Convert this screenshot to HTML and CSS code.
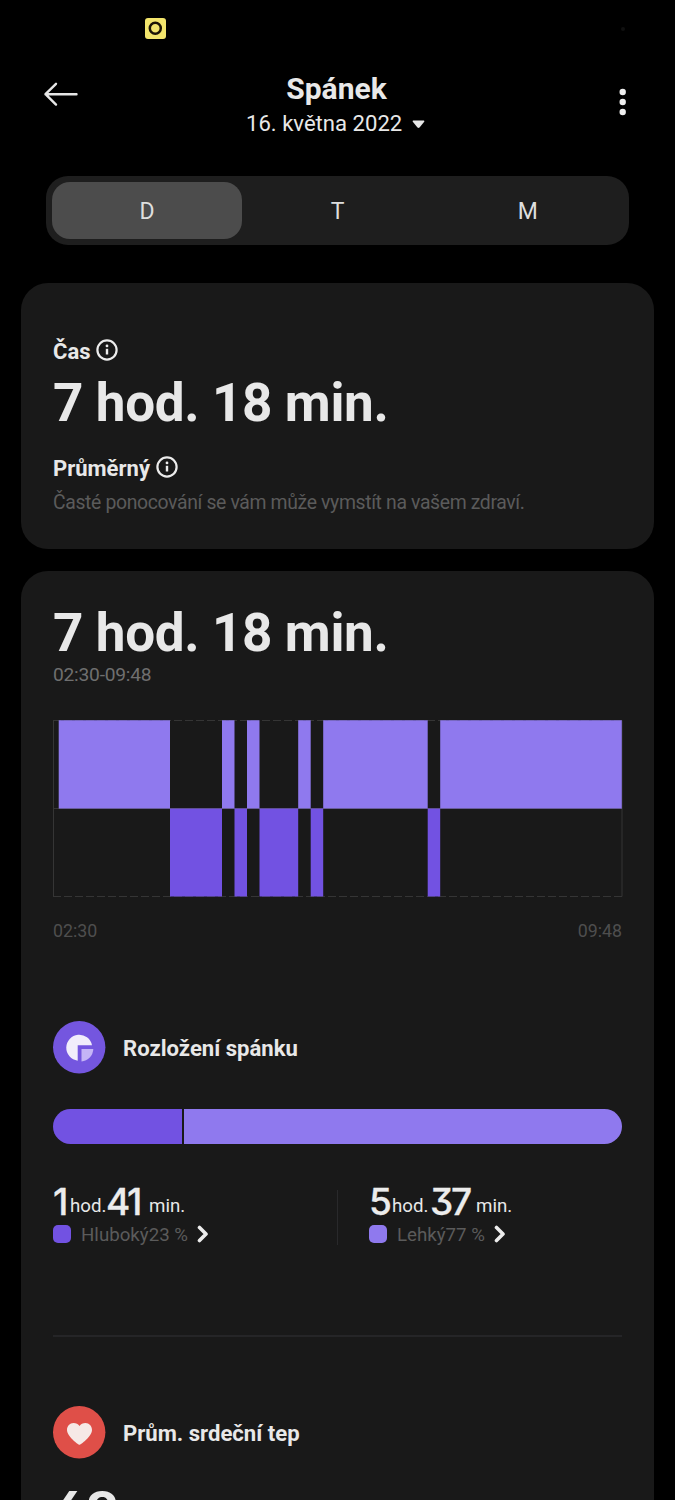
FILE: index.html
```html
<!DOCTYPE html>
<html lang="cs">
<head>
<meta charset="utf-8">
<title>Spánek</title>
<link rel="stylesheet" href="styles.css">
</head>
<body>
<div class="screen">
  <div class="status">
    <svg class="status-app" viewBox="0 0 21 21"><rect width="21" height="21" rx="3" fill="#f3e56c"/><circle cx="10.3" cy="10.3" r="5.5" fill="none" stroke="#1c1405" stroke-width="2.5"/></svg>
    <span class="status-dot"></span>
  </div>

  <header class="header">
    <svg class="back" viewBox="0 0 36 26" fill="none" stroke="#e6e6e6" stroke-width="2.4" stroke-linecap="round" stroke-linejoin="round"><path d="M13 2.8 2.500 13.2l10.500 10.400M2.500 13.2h31"/></svg>
    <div class="heading">
      <h1 class="title">Spánek</h1>
      <div class="date"><span class="date-text">16. května 2022</span>
        <svg class="caret" viewBox="0 0 13 9"><path d="M1.200 .5h10.600q1 .3.400 1.200L7.500 7.600q-1 .9-2 0L.8 1.700q-.6-.9.400-1.200z" fill="#e6e6e6"/></svg>
      </div>
    </div>
    <svg class="more" viewBox="0 0 8 28" fill="#efefef"><circle cx="3.700" cy="4" r="3.200"/><circle cx="3.700" cy="14" r="3.200"/><circle cx="3.700" cy="24" r="3.200"/></svg>
  </header>

  <nav class="tabs">
    <span class="tab tab-active">D</span><span class="tab">T</span><span class="tab">M</span>
  </nav>

  <section class="card summary">
    <div class="label"><span class="label-cas">Čas</span>
      <svg class="info" viewBox="0 0 22 22"><circle cx="11" cy="11" r="9.600" fill="none" stroke="#ececec" stroke-width="2.200"/><path d="M11 9.800v5.700" stroke="#ececec" stroke-width="2.400"/><circle cx="11" cy="6.900" r="1.400" fill="#ececec"/></svg>
    </div>
    <div class="total">7 hod. 18 min.</div>
    <div class="label label-rating"><span class="label-avg">Průměrný</span>
      <svg class="info" viewBox="0 0 22 22"><circle cx="11" cy="11" r="9.600" fill="none" stroke="#ececec" stroke-width="2.200"/><path d="M11 9.800v5.700" stroke="#ececec" stroke-width="2.400"/><circle cx="11" cy="6.900" r="1.400" fill="#ececec"/></svg>
    </div>
    <p class="advice">Časté ponocování se vám může vymstít na vašem zdraví.</p>
  </section>

  <section class="card detail">
    <div class="total">7 hod. 18 min.</div>
    <div class="range">02:30-09:48</div>
    <svg class="chart" viewBox="0 0 570 178">
      <g fill="none" stroke="#353535" stroke-width="1">
        <path d="M.5 .5v176M569 .5v176M0 88.500h569"/>
        <path d="M0 .5h569M0 176.500h569" stroke-dasharray="8 3"/>
      </g>
      <g fill="#8f79ee">
        <path d="M5.700 .2h111.300v88.400H5.700zM169 .2h12.500v88.400H169zM194 .2h12.500v88.400H194zM245.200 .2h12.500v88.400h-12.500zM270.200 .2h104.500v88.400H270.200zM387.200 .2h181.600v88.400H387.200z"/>
      </g>
      <g fill="#7252e2">
        <path d="M117 88.600h52v88h-52zM181.500 88.600H194v88h-12.500zM206.500 88.600h38.700v88h-38.700zM257.700 88.600h12.500v88h-12.500zM374.700 88.600h12.500v88h-12.500z"/>
      </g>
      <path d="M6 88.500h563" stroke="#7768b0" stroke-width="1" stroke-opacity=".35"/>
    </svg>
    <div class="axis"><span>02:30</span><span>09:48</span></div>

    <div class="section-head">
      <svg class="badge" viewBox="0 0 53 53"><circle cx="26.200" cy="26.300" r="26.200" fill="#7456df"/><path d="M39 24.200H24.700V39.700A13 13 0 1 1 39 24.200z" fill="#f1edfb"/><path d="M28.500 28h11.800a13 13 0 0 1-11.800 12.500z" fill="#c5b5f6"/></svg>
      <h2 class="section-title">Rozložení spánku</h2>
    </div>
    <div class="split"><span class="split-deep"></span><span class="split-light"></span></div>
    <div class="stats">
      <div class="stat stat-deep">
        <div class="duration"><b class="num n1">1</b><span class="unit">hod.</span><b class="num n41">41</b><span class="unit">min.</span></div>
        <div class="legend"><i class="swatch deep"></i><span class="legend-text">Hluboký23 %</span><svg class="chevron" viewBox="0 0 12 18"><path d="M2.500 2.500 9 9l-6.500 6.500" fill="none" stroke="#ececec" stroke-width="3.600" stroke-linecap="round" stroke-linejoin="round"/></svg></div>
      </div>
      <div class="stat stat-light">
        <div class="duration"><b class="num n5">5</b><span class="unit">hod.</span><b class="num n37">37</b><span class="unit">min.</span></div>
        <div class="legend"><i class="swatch light"></i><span class="legend-text">Lehký77 %</span><svg class="chevron" viewBox="0 0 12 18"><path d="M2.500 2.500 9 9l-6.500 6.500" fill="none" stroke="#ececec" stroke-width="3.600" stroke-linecap="round" stroke-linejoin="round"/></svg></div>
      </div>
    </div>
    <div class="section-head heart-head">
      <svg class="badge" viewBox="0 0 53 53"><circle cx="26.200" cy="26.300" r="26.200" fill="#df4f48"/><path d="M26.500 38.800c-1 0-12.500-8.300-12.500-14.800 0-4 2.900-7 6.500-7 2.500 0 4.900 1.200 6 3 1.100-1.800 3.500-3 6-3 3.600 0 6.500 3 6.500 7 0 6.500-11.500 14.800-12.500 14.800z" fill="#f6e9e6"/></svg>
      <h2 class="section-title">Prům. srdeční tep</h2>
    </div>
    <div class="pulse">68</div>
  </section>
</div>
</body>
</html>
```

FILE: styles.css
```css
* { box-sizing: border-box; }
body { margin: 0; background: #000; font-family: Roboto, sans-serif; color: #e8e8e8; }
h1, h2, p { margin: 0; }
svg { display: block; flex: none; }

.screen { width: 675px; height: 1500px; overflow: hidden; background: #000; display: flex; flex-direction: column; }

.status { height: 60px; flex: none; padding: 18px 50px 0 145px; display: flex; justify-content: space-between; align-items: flex-start; }
.status-app { width: 21px; height: 21px; }
.status-dot { width: 4px; height: 4px; border-radius: 2px; background: #101010; margin-top: 9px; }

.header { height: 116px; flex: none; padding: 0 48px 0 43px; display: grid; grid-template-columns: 203px 181px 1fr; align-items: start; }
.back { width: 36px; height: 26px; margin-top: 21px; }
.heading { padding-top: 11px; }
.title { font-size: 30px; line-height: 36px; font-weight: 700; white-space: nowrap; text-align: center; }
.date { display: flex; align-items: center; gap: 10px; font-size: 22.100px; line-height: 32px; white-space: nowrap; }
.caret { width: 13px; height: 9px; margin-top: 2px; }
.more { width: 8px; height: 28px; margin-top: 28px; justify-self: end; }

.tabs { margin: 0 46px; width: 583px; height: 69px; flex: none; padding: 6px; border-radius: 22px; background: #1e1e1e; display: grid; grid-template-columns: repeat(3, 1fr); }
.tab { display: flex; align-items: center; justify-content: center; padding-top: 2px; font-size: 23px; color: #dedede; border-radius: 18px; }
.tab-active { background: #4c4c4c; }

.card { margin: 0 21px; width: 633px; flex: none; padding: 0 32px; background: #191919; border-radius: 27px; }
.summary { margin-top: 38px; height: 266px; padding-top: 54px; }
.label { display: flex; align-items: center; gap: 6px; font-size: 22px; line-height: 27px; font-weight: 700; height: 27px; padding-top: 1px; }
.info { width: 22px; height: 22px; margin-bottom: 3px; }
.total { font-size: 53px; line-height: 60px; font-weight: 700; white-space: nowrap; color: #e8e8e8; margin-top: 9px; letter-spacing: -.37px; }
.label-rating { margin-top: 21px; }
.advice { font-size: 19.400px; letter-spacing: -.36px; line-height: 28px; color: #5b5b5b; white-space: nowrap; margin-top: 8px; }

.detail { margin-top: 22px; height: 960px; padding-top: 32px; }
.detail .total { margin-top: 0; }
.range { font-size: 19.200px; letter-spacing: -.23px; line-height: 26px; color: #6f6f6f; margin-top: -1px; }
.chart { width: 570px; height: 178px; margin-top: 32px; }
.axis { display: flex; justify-content: space-between; font-size: 17.800px; line-height: 24px; color: #4e4e4e; margin-top: 21px; }

.section-head { display: flex; align-items: center; gap: 17px; margin-top: 78px; height: 53px; }
.badge { width: 53px; height: 53px; }
.section-title { font-size: 22.100px; line-height: 30px; font-weight: 700; white-space: nowrap; }
.split { display: flex; gap: 2px; height: 35px; margin-top: 35px; overflow: hidden; border-radius: 18px; }
.split-deep { width: 129px; background: #7252e2; }
.split-light { flex: 1; background: #8f79ee; }

.stats { display: grid; grid-template-columns: 316px 1fr; height: 193px; padding-top: 38px; border-bottom: 2px solid #252527; }
.stat-deep { background: linear-gradient(#29292b, #29292b) no-repeat 284px 8px / 1px 55px; }
.duration { display: flex; line-height: 40px; height: 40px; white-space: nowrap; }
.num { font-family: Inter, sans-serif; font-weight: 500; font-size: 37px; font-feature-settings: "cv09" 1; display: block; letter-spacing: -2.300px; color: #ececec; -webkit-text-stroke: .3px #ececec; }
.n1 { width: 17px; }
.n5 { width: 23px; }
.n41 { width: 43px; }
.n37 { width: 46px; margin-left: 2px; }
.unit { font-size: 18.700px; line-height: 48px; display: block; width: 35px; margin-right: 1px; }
.legend { display: flex; align-items: center; height: 22px; margin-top: 1px; font-size: 18.700px; color: #5b5b5b; white-space: nowrap; }
.legend-text { padding-top: 1px; }
.swatch { width: 18px; height: 18px; border-radius: 5px; margin-right: 10px; }
.deep { background: #7252e2; }
.light { background: #8f79ee; }
.chevron { width: 12px; height: 18px; margin-left: 9px; }

.heart-head { margin-top: 69px; }
.pulse { font-family: Inter, sans-serif; font-weight: 700; font-size: 53px; line-height: 60px; font-feature-settings: "cv03" 1; margin-top: 22px; letter-spacing: -.5px; }
```
